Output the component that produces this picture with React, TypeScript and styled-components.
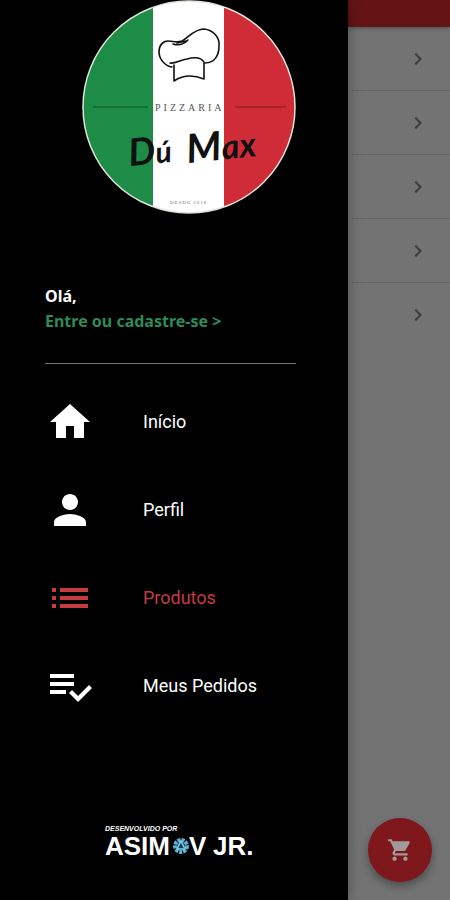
import React from "react";
import styled, { createGlobalStyle } from "styled-components";

const GlobalStyle = createGlobalStyle`
  *, *::before, *::after { box-sizing: border-box; }
  body { margin: 0; background: #000; font-family: Roboto, sans-serif; }
`;

const Screen = styled.div`
  display: grid;
  grid-template-columns: minmax(0, 348px) minmax(102px, 1fr);
  min-height: 100vh;
`;

const Drawer = styled.aside`
  display: flex;
  flex-direction: column;
  padding: 0 52px 38px 45px;
  background: #000;
  color: #fff;
  box-shadow: 0 0 12px rgba(0, 0, 0, 0.35);
  z-index: 1;
`;

const BrandLogo = styled.svg`
  display: block;
  width: 216px;
  height: 216px;
  margin-left: 36px;
`;

const Account = styled.section`
  display: flex;
  flex-direction: column;
  align-items: flex-start;
  margin-top: 68px;
  padding-bottom: 29px;
  border-bottom: 1px solid #747474;
  font-family: "Noto Sans", sans-serif;
  font-size: 16px;
  font-weight: 700;
  line-height: 25px;
  white-space: nowrap;
`;

const Greeting = styled.span`
  color: #fff;
`;

const SignIn = styled.a`
  color: #2e8b57;
  text-decoration: none;
`;

const Menu = styled.nav`
  display: flex;
  flex-direction: column;
  margin-top: 14px;
`;

const MenuLink = styled.a<{ $active?: boolean }>`
  display: flex;
  align-items: center;
  gap: 49px;
  height: 88px;
  padding-left: 1px;
  color: ${(p) => (p.$active ? "#c43c40" : "#fff")};
  font-size: 18px;
  line-height: 24px;
  text-decoration: none;
  white-space: nowrap;
`;

const Icon = styled.svg<{ $size: number }>`
  display: block;
  flex: none;
  width: ${(p) => p.$size}px;
  height: ${(p) => p.$size}px;
  fill: currentColor;
`;

const Credit = styled.svg`
  display: block;
  width: 150px;
  height: 38px;
  margin: auto 0 0 59px;
`;

const Page = styled.main`
  display: flex;
  flex-direction: column;
  background: #737373;
`;

const TopBar = styled.header`
  height: 27px;
  background: #641414;
  box-shadow: 0 1px 4px rgba(0, 0, 0, 0.35);
`;

const Categories = styled.div`
  display: flex;
  flex-direction: column;
  padding-left: 4px;
`;

const CategoryRow = styled.button`
  display: flex;
  align-items: center;
  justify-content: flex-end;
  height: 64px;
  padding: 0 20px 0 0;
  border: 0;
  border-bottom: 1px solid #656565;
  background: transparent;
  color: #3c3c3c;

  &:last-child { border-bottom-color: transparent; }
`;

const CartButton = styled.button`
  display: grid;
  place-items: center;
  width: 64px;
  height: 64px;
  margin: auto 18px 18px auto;
  padding: 0;
  border: 0;
  border-radius: 50%;
  background: #7d171b;
  color: #a29a9a;
  box-shadow: 0 4px 8px rgba(0, 0, 0, 0.35);
`;

const paths = {
  home: "M10 20v-6h4v6h5v-8h3L12 3 2 12h3v8z",
  person:
    "M12 12c2.21 0 4-1.79 4-4s-1.79-4-4-4-4 1.79-4 4 1.79 4 4 4zm0 2c-2.67 0-8 1.34-8 4v2h16v-2c0-2.66-5.33-4-8-4z",
  list: "M3 13h2v-2H3v2zm0 4h2v-2H3v2zm0-8h2V7H3v2zm4 4h14v-2H7v2zm0 4h14v-2H7v2zM7 7v2h14V7H7z",
  orders:
    "M14 10H2v2h12v-2zm0-4H2v2h12V6zM2 16h8v-2H2v2zm19.5-4.5L23 13l-6.99 7-4.51-4.5L13 14l3.01 3 5.49-5.5z",
  chevron: "M10 6 8.59 7.41 13.17 12l-4.58 4.59L10 18l6-6z",
  cart: "M7 18c-1.1 0-1.99.9-1.99 2S5.9 22 7 22s2-.9 2-2-.9-2-2-2zM1 2v2h2l3.6 7.59-1.35 2.45c-.16.28-.25.61-.25.96 0 1.1.9 2 2 2h12v-2H7.42c-.14 0-.25-.11-.25-.25l.03-.12.9-1.63h7.45c.75 0 1.41-.41 1.75-1.03l3.58-6.49c.08-.14.12-.31.12-.48 0-.55-.45-1-1-1H5.21l-.94-2H1zm16 16c-1.1 0-1.99.9-1.99 2s.89 2 1.99 2 2-.9 2-2-.9-2-2-2z",
};

function Glyph({ name, size }: { name: keyof typeof paths; size: number }) {
  return (
    <Icon $size={size} viewBox="0 0 24 24" aria-hidden="true">
      <path d={paths[name]} />
    </Icon>
  );
}

const menuItems: { icon: keyof typeof paths; label: string; active?: boolean }[] = [
  { icon: "home", label: "Início" },
  { icon: "person", label: "Perfil" },
  { icon: "list", label: "Produtos", active: true },
  { icon: "orders", label: "Meus Pedidos" },
];

const categories = [1, 2, 3, 4, 5];

function PizzariaLogo() {
  return (
    <BrandLogo viewBox="0 0 216 216" role="img" aria-label="Pizzaria Dú Max">
      <clipPath id="disc">
        <circle cx="108" cy="107" r="106" />
      </clipPath>
      <g clipPath="url(#disc)">
        <rect width="72" height="216" fill="#1c8c46" />
        <rect x="72" width="71" height="216" fill="#fff" />
        <rect x="143" width="73" height="216" fill="#d02c38" />
      </g>
      <circle cx="108" cy="107" r="106" fill="none" stroke="#dfe3da" strokeWidth="1.5" />
      <g fill="none" stroke="#111" strokeWidth="1.6" strokeLinecap="round" strokeLinejoin="round">
        <path d="M91 67C84 66 78 59 78 52C78 45 82 41 87 41C92 41 96 43 101 41C107 38 113 29 123 29C132 30 139 37 138 46C138 55 134 63 124 63" />
        <path d="M92 44C98 46 103 44 107 40M96 43L105 41" />
        <path d="M89 63C94 64 99 60 106 59C113 57 120 57 123 62M93 65L93 81C102 75 113 75 123 79L123 62" />
      </g>
      <path d="M12 107H67M154 107H205" stroke="#000" strokeOpacity=".4" />
      <text x="74" y="111" fill="#555" fontFamily="Liberation Serif, serif" fontSize="10" letterSpacing="3">PIZZARIA</text>
      <g transform="rotate(-6 108 155)" fontFamily="Lato, sans-serif" fontStyle="italic" fontWeight="700" fill="#111">
        <text x="48" y="160" fontSize="38">D<tspan fontSize="30">ú</tspan></text>
        <text x="106" y="163" fontSize="40">M<tspan fontSize="34">ax</tspan></text>
      </g>
      <text x="89" y="204" fill="#777" fontFamily="Liberation Serif, serif" fontSize="5" letterSpacing="1">DESDE 2018</text>
    </BrandLogo>
  );
}

function AsimovLogo() {
  return (
    <Credit viewBox="0 0 150 38" role="img" aria-label="Desenvolvido por Asimov Jr.">
      <g fill="#fff" fontFamily="Liberation Sans, sans-serif" fontWeight="700">
        <text x="1" y="7" fontSize="7" fontStyle="italic">DESENVOLVIDO POR</text>
        <g fontSize="26">
          <text x="1" y="31">ASIM</text>
          <text x="85" y="31">V</text>
          <text x="109" y="31">JR.</text>
        </g>
      </g>
      <circle cx="77" cy="22" r="6" fill="#173f57" stroke="#62aed0" strokeWidth="4" strokeDasharray="3 1" />
      <path d="M77 17L81 25H73Z" fill="none" stroke="#8bd0ea" strokeWidth="1.5" />
    </Credit>
  );
}

export default function App() {
  return (
    <>
      <GlobalStyle />
      <Screen>
        <Drawer>
          <PizzariaLogo />
          <Account>
            <Greeting>Olá,</Greeting>
            <SignIn href="#entrar">Entre ou cadastre-se &gt;</SignIn>
          </Account>
          <Menu>
            {menuItems.map((item) => (
              <MenuLink
                key={item.icon}
                href={`#${item.icon}`}
                $active={item.active}
                aria-current={item.active ? "page" : undefined}
              >
                <Glyph name={item.icon} size={48} />
                {item.label}
              </MenuLink>
            ))}
          </Menu>
          <AsimovLogo />
        </Drawer>
        <Page>
          <TopBar />
          <Categories>
            {categories.map((id) => (
              <CategoryRow key={id} type="button" aria-label={`Categoria ${id}`}>
                <Glyph name="chevron" size={24} />
              </CategoryRow>
            ))}
          </Categories>
          <CartButton type="button" aria-label="Carrinho">
            <Glyph name="cart" size={26} />
          </CartButton>
        </Page>
      </Screen>
    </>
  );
}
